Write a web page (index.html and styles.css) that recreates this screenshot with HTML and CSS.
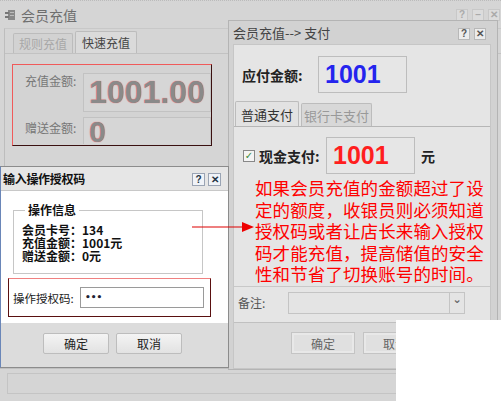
FILE: index.html
```html
<!DOCTYPE html>
<html lang="zh">
<head>
<meta charset="utf-8">
<title>会员充值</title>
<link rel="stylesheet" href="styles.css">
</head>
<body>
<div class="desk">
  <div class="win main">
    <div class="main-title">
      <svg class="app-icon" width="11" height="12" viewBox="0 0 11 12"><rect x="3" y="1" width="7" height="10" fill="#888"/><rect x="0" y="3" width="4" height="2" fill="#777"/><rect x="0" y="7" width="4" height="2" fill="#777"/><rect x="5" y="3" width="4" height="1" fill="#bbb"/><rect x="5" y="6" width="4" height="1" fill="#bbb"/></svg>
      <span>会员充值</span>
    </div>
    <div class="ctrls main-ctrls">
      <span class="cbtn faded">?</span><span class="cbtn faded">–</span><span class="cbtn faded">✕</span>
    </div>
    <div class="main-body">
      <div class="tabs">
        <div class="tab off">规则充值</div>
        <div class="tab on">快速充值</div>
      </div>
      <div class="tab-panel">
        <div class="redbox">
          <div class="amt-row">
            <span class="amt-lbl">充值金额:</span>
            <div class="bigfield">1001.00</div>
          </div>
          <div class="amt-row second">
            <span class="amt-lbl">赠送金额:</span>
            <div class="bigfield short">0</div>
          </div>
        </div>
      </div>
    </div>
    <div class="statusbar"><div class="status-inner"></div></div>
  </div>

  <div class="win pay">
    <div class="pay-title">会员充值--&gt; 支付</div>
    <div class="ctrls pay-ctrls"><span class="cbtn">?</span><span class="cbtn">✕</span></div>
    <div class="pay-body">
      <div class="due-row">
        <span class="due-lbl">应付金额:</span>
        <div class="numfield blue">1001</div>
      </div>
      <div class="tabs pay-tabs">
        <div class="tab on">普通支付</div>
        <div class="tab off2">银行卡支付</div>
      </div>
      <div class="pay-panel">
        <div class="cash-row">
          <span class="chk">✓</span>
          <span class="cash-lbl">现金支付:</span>
          <div class="numfield red">1001</div>
          <span class="yuan">元</span>
        </div>
        <p class="note">如果会员充值的金额超过了设定的额度，收银员则必须知道授权码或者让店长来输入授权码才能充值，提高储值的安全性和节省了切换账号的时间。</p>
        <div class="remark-row">
          <span class="remark-lbl">备注:</span>
          <div class="combo"><span class="combo-btn">⌄</span></div>
        </div>
      </div>
      <div class="pay-foot">
        <span class="fbtn">确定</span><span class="fbtn">取消</span>
      </div>
    </div>
  </div>

  <div class="win dlg">
    <div class="dlg-title">输入操作授权码</div>
    <div class="ctrls dlg-ctrls"><span class="cbtn">?</span><span class="cbtn">✕</span></div>
    <div class="dlg-body">
      <fieldset class="group">
        <legend>操作信息</legend>
        <div class="info">会员卡号：134</div>
        <div class="info">充值金额：1001元</div>
        <div class="info">赠送金额：0元</div>
      </fieldset>
      <div class="auth-box">
        <span class="auth-lbl">操作授权码:</span>
        <div class="auth-input">•••</div>
      </div>
    </div>
    <div class="dlg-foot">
      <span class="dbtn">确定</span><span class="dbtn">取消</span>
    </div>
  </div>

  <svg class="arrow" width="64" height="12" viewBox="0 0 64 12"><line x1="0" y1="6" x2="52" y2="6" stroke="#d00" stroke-width="1.2"/><polygon points="50,1 62,6 50,11" fill="#e00"/></svg>

  <div class="blank"></div>
</div>
</body>
</html>
```
FILE: styles.css
```css
* { box-sizing: border-box; }
html, body { margin: 0; padding: 0; }
body {
  width: 501px; height: 401px; overflow: hidden;
  font-family: "Noto Sans CJK SC", "Liberation Sans", sans-serif;
  background: #d4d4d4;
}
.desk { position: relative; width: 501px; height: 401px; }
.win { position: absolute; }

/* main window */
.main {
  left: 0; top: 0; width: 501px; height: 401px;
  background: #d5d5d5;
  border-top: 1px dotted #bbb;
  display: flex; flex-direction: column;
}
.main-title {
  height: 27px; display: flex; align-items: center; gap: 5px;
  padding-left: 5px; font-size: 14px; color: #6e6e6e;
}
.ctrls { position: absolute; display: flex; gap: 3px; }
.cbtn {
  width: 12px; height: 12px; border: 1px solid #b8b8b8; background: #ececec;
  font: bold 10px/10px "Liberation Sans", sans-serif; color: #555;
  display: flex; align-items: center; justify-content: center;
}
.cbtn.faded { color: #aaa; background: #dcdcdc; border-color: #c8c8c8; }
.main-ctrls { right: 1px; top: 8px; gap: 4px; }
.main-body {
  margin-left: 4px; height: 340px;
  border-left: 1px solid #bdbdbd; border-top: 1px solid #c8c8c8;
  padding-top: 2px;
}
.tabs { display: flex; gap: 2px; padding-left: 8px; height: 22px; align-items: flex-end; }
.tab {
  font-size: 12px; height: 22px; padding: 0;
  white-space: nowrap;
  display: flex; align-items: center; justify-content: center;
  border: 1px solid #bcbcbc; border-bottom: none; border-radius: 2px 2px 0 0;
}
.tab.off { color: #a8a8a8; background: #d2d2d2; width: 60px; height: 20px; }
.tab.on { color: #444; background: #dadada; width: 62px; }
.tab-panel { border-top: 1px solid #c2c2c2; padding: 10px 0 0 7px; }
.redbox {
  width: 200px; height: 82px;
  border: 1px solid #f05a5a; border-right-color: #3a1010; border-bottom-color: #3a1010;
  padding: 8px 0 0 12px;
  display: flex; flex-direction: column; gap: 5px;
  background: #d3d3d3;
}
.amt-row { display: flex; align-items: flex-start; }
.amt-lbl { width: 58px; font-size: 12px; line-height: 16px; color: #777; }
.bigfield {
  width: 128px; height: 39px; border: 1px solid #c2c2c2; background: #d6d6d6;
  font: bold 32px/37px "Liberation Sans", sans-serif; color: #8a8a8a;
  padding-left: 5px;
  text-shadow: 0 0 1px #ff4040;
}
.bigfield.short { height: 27px; font-size: 30px; line-height: 27px; border-bottom: none; }
.amt-row.second .amt-lbl { padding-top: 3px; }
.statusbar { margin-top: auto; height: 33px; padding: 4px 0 0 7px; border-top: 1px solid #c0c0c0; }
.status-inner { height: 21px; border: 1px solid #c4c4c4; border-right: none; }

/* payment window */
.pay {
  left: 228px; top: 20px; width: 270px; height: 350px;
  background: #d2d2d2; border: 1px solid #b4b4b4;
  display: flex; flex-direction: column;
}
.pay-title { height: 23px; padding-left: 4px; font-size: 13px; line-height: 24px; color: #444; }
.pay-ctrls { right: 11px; top: 7px; gap: 4px; }
.pay-body {
  margin: 0 6px 0 4px; flex: 1;
  background: #e5e5e5; border: 1px solid #c6c6c6;
  display: flex; flex-direction: column;
}
.due-row { display: flex; align-items: center; padding: 11px 0 0 8px; }
.due-lbl { width: 76px; font-size: 14px; font-weight: bold; color: #222; }
.numfield {
  width: 89px; height: 37px; border: 1px solid #bdbdbd; background: #e6e6e6;
  font: bold 25px/35px "Liberation Sans", sans-serif; padding-left: 6px;
}
.numfield.blue { color: #2424ee; }
.numfield.red { color: #ff1e1e; }
.pay-tabs { padding-left: 1px; margin-top: 8px; height: 25px; gap: 2px; }
.pay-tabs .tab { height: 25px; font-size: 13px; }
.pay-tabs .tab.on { width: 64px; background: #e2e2e2; color: #333; }
.pay-tabs .tab.off2 { width: 71px; height: 23px; background: #d8d8d8; color: #999; }
.pay-panel { border-top: 1px solid #b6b6b6; flex: 0 0 196px; display: flex; flex-direction: column; }
.cash-row { display: flex; align-items: center; padding: 10px 0 0 9px; }
.chk {
  width: 12px; height: 12px; border: 1px solid #888; background: #f4f4f4;
  font: bold 10px/10px "DejaVu Sans", sans-serif; color: #3a8a3a;
  display: flex; align-items: center; justify-content: center;
}
.cash-lbl { width: 67px; margin-left: 4px; font-size: 14px; font-weight: bold; color: #222; }
.yuan { margin-left: 6px; font-size: 14px; font-weight: bold; color: #222; }
.note {
  margin: 3px 0 0 21px; width: 236px;
  font-size: 17.5px; line-height: 21.6px; color: #f00;
  letter-spacing: 0.1px;
}
.remark-row {
  margin-top: 1px; border-top: 1px solid #c8c8c8;
  display: flex; align-items: center; padding: 5px 0 0 4px;
}
.remark-lbl { width: 50px; font-size: 12px; color: #555; }
.combo {
  width: 177px; height: 22px; border: 1px solid #c4c4c4; background: #e4e4e4;
  display: flex; justify-content: flex-end;
}
.combo-btn {
  width: 15px; border-left: 1px solid #c4c4c4; color: #666;
  font: bold 11px/14px "DejaVu Sans", sans-serif; text-align: center;
}
.pay-foot {
  flex: 1; border-top: 1px solid #c0c0c0; background: #dadada;
  display: flex; gap: 8px; padding: 9px 0 0 57px;
}
.fbtn {
  width: 64px; height: 22px; border: 1px solid #c4c4c4; background: #e0e0e0;
  font-size: 12px; color: #666; display: flex; align-items: center; justify-content: center;
  box-shadow: inset 0 0 0 2px #e8e8e8;
}

/* auth dialog */
.dlg {
  left: 0; top: 166px; width: 229px; height: 202px;
  border: 1px solid #8c8c8c; border-left-color: #6a86b8;
  background: #dcdcdc;
  display: flex; flex-direction: column;
}
.dlg-title {
  height: 23px; background: #e6e6e6; padding-left: 2px;
  font-size: 12px; font-weight: bold; line-height: 23px; color: #111;
  letter-spacing: -0.3px;
}
.dlg-ctrls { right: 7px; top: 6px; gap: 3px; }
.dlg-ctrls .cbtn { width: 13px; height: 13px; background: #f0f3f8; border-color: #9aa4b4; color: #234; }
.dlg-body { background: #fff; height: 133px; padding: 13px 0 0 7px; border-top: 1px solid #c8c8c8; }
.group {
  margin: 0 0 0 5px; width: 190px; height: 70px;
  border: 1px solid #c6c6c6; padding: 7px 0 0 8px;
}
.group legend { font-size: 12px; font-weight: bold; padding: 0 3px; margin-left: 3px; color: #111; line-height: 12px; }
.info { font-size: 12px; font-weight: bold; line-height: 13px; color: #111; }
.auth-box {
  margin-top: 4px; width: 203px; height: 39px;
  border: 1px solid #5a1010; border-top-color: #f08080;
  display: flex; align-items: center; padding-left: 4px;
}
.auth-lbl { width: 67px; font-size: 11.5px; color: #222; }
.auth-input {
  width: 124px; height: 21px; border: 1px solid #9a9a9a; background: #fff;
  font: bold 9px/19px "DejaVu Sans", sans-serif; color: #223; padding-left: 4px;
}
.dlg-foot { flex: 1; display: flex; gap: 7px; padding: 10px 0 0 42px; }
.dbtn {
  width: 66px; height: 21px; border: 1px solid #bdbdbd; border-radius: 2px;
  background: linear-gradient(#f4f4f4, #e2e2e2);
  font-size: 12px; color: #222; display: flex; align-items: center; justify-content: center;
}

.arrow { position: absolute; left: 192px; top: 221px; }
.blank { position: absolute; left: 396px; top: 320px; width: 105px; height: 81px; background: #fff; }
```
